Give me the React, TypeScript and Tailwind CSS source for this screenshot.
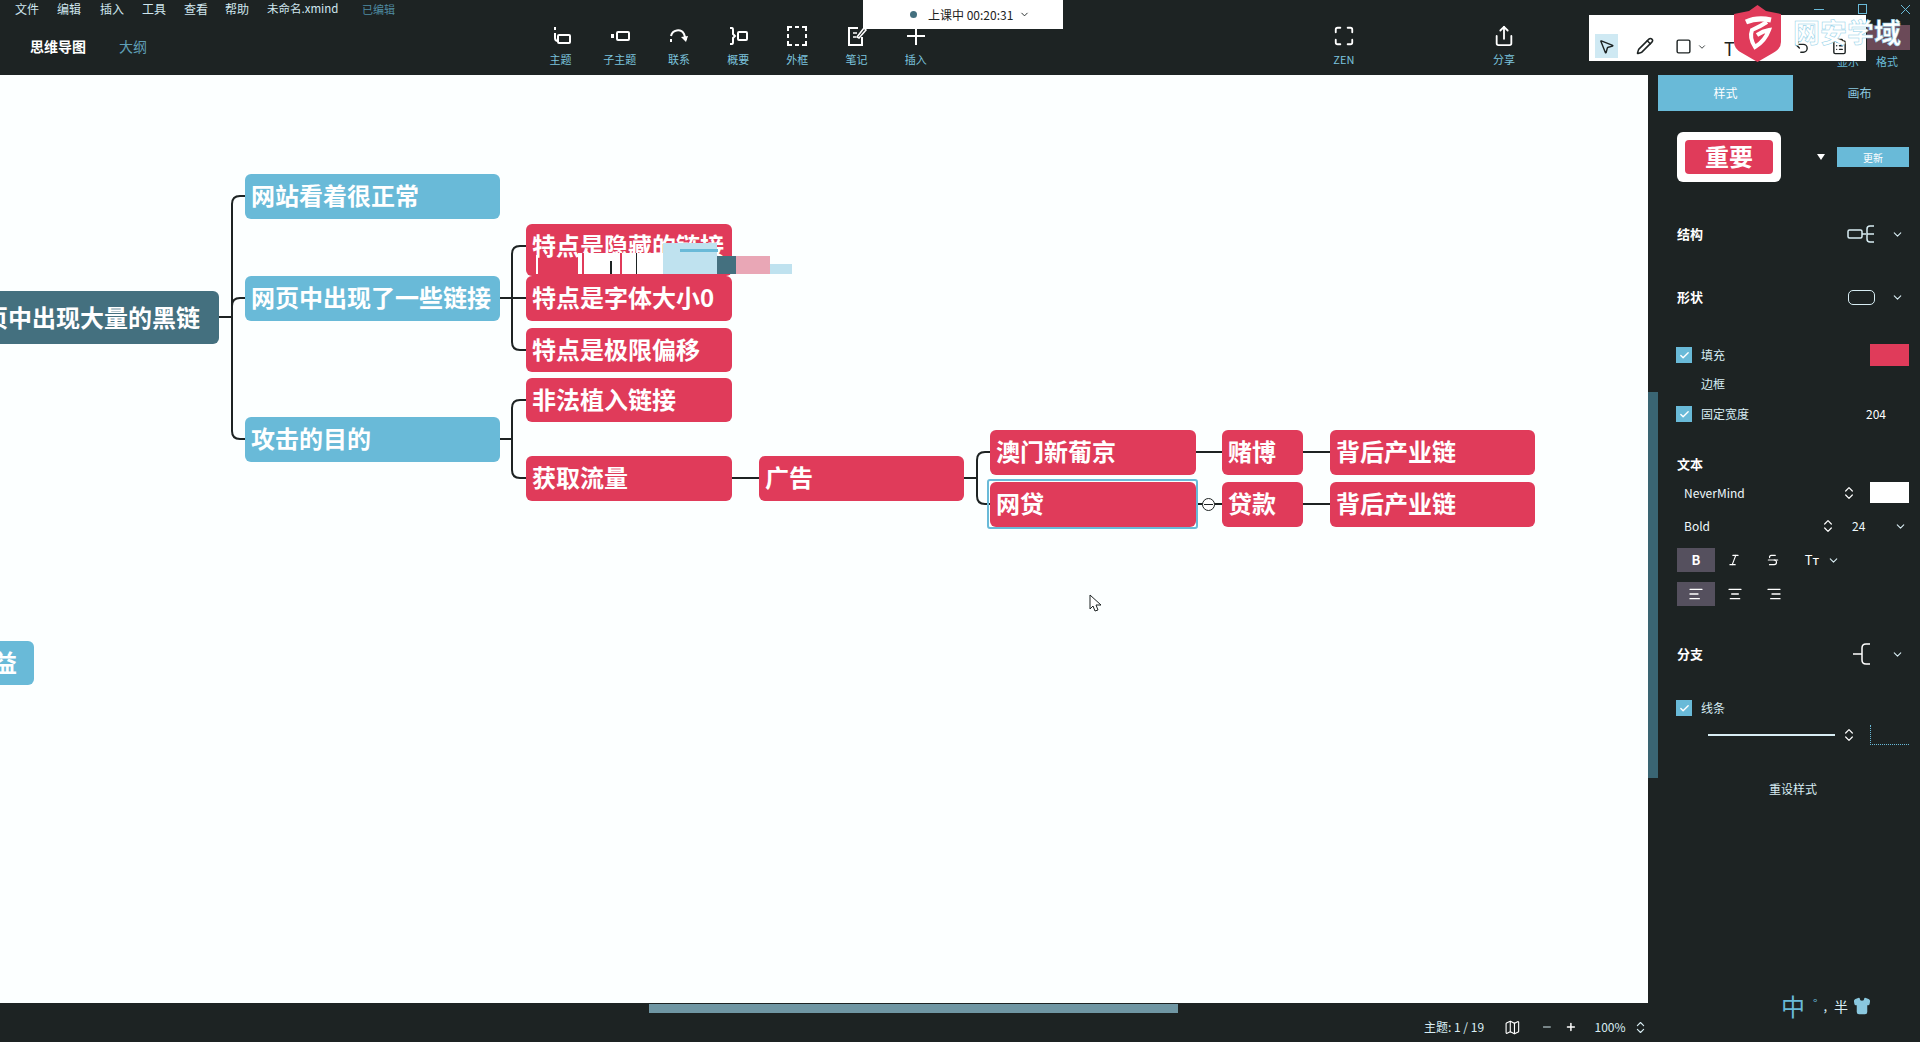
import React from "react";
import { ChevronDown, ChevronsUpDown, Map as MapIcon, Maximize, Share, MousePointer2, Pencil, Square, Undo2, ClipboardList, Italic, Strikethrough, AlignLeft, AlignCenter, AlignRight, Minus, Plus, Shirt, Check } from "lucide-react";

const FONT = "font-['Noto_Sans_CJK_SC','Noto_Sans',sans-serif]";

const ic = { width: 22, height: 22, viewBox: "0 0 22 22", fill: "none", stroke: "#ffffff", strokeWidth: 2 };
const IconTopic = () => (<svg {...ic}><path d="M5 2v3M5 8v5q0 3 3 3" /><rect x="8" y="10" width="12" height="8" rx="1" /></svg>);
const IconSub = () => (<svg {...ic}><rect x="2" y="9" width="3" height="4" fill="#fff" stroke="none" /><rect x="8" y="7" width="12" height="8" rx="1" /></svg>);
const IconRel = () => (<svg {...ic}><path d="M3 11a7 7 0 0 1 13-2l2 6" /><path d="M3 14v3" /><path d="M13 12l5 5 2-6z" fill="#fff" stroke="none" /></svg>);
const IconSum = () => (<svg {...ic}><path d="M3 3h2q1 0 1 2v4l2 2-2 2v4q0 2-1 2H3" /><rect x="11" y="7" width="9" height="8" rx="1" /></svg>);
const IconBox = () => (<svg {...ic}><path d="M2 6V2h4M9 2h4M16 2h4v4M20 9v4M20 16v4h-4M13 20H9M6 20H2v-4M2 13V9" /></svg>);
const IconNote = () => (<svg {...ic}><path d="M12 3H3v17h13v-8" /><path d="M7 8h4M7 12h3" strokeWidth="1.5" /><path d="M11 12l7-9 2 2-7 8z" strokeWidth="1.5" /></svg>);
const IconPlus = () => (<svg {...ic}><path d="M11 2v18M2 11h18" /></svg>);

function Tool({ icon, label }: { icon: React.ReactNode; label: string }) {
  return (
    <div className="w-[59.2px] h-full flex flex-col items-center pt-[7px] shrink-0">
      <div className="h-[22px] flex items-center justify-center">{icon}</div>
      <div className="mt-[2px] text-[11px] leading-[20px] text-[#7cc4de]">{label}</div>
    </div>
  );
}

function Node({ x, y, w, h, text, color = "bg-[#e03b5a]", pad = "pb-[3px]" }: { x: number; y: number; w: number; h: number; text: string; color?: string; pad?: string }) {
  return (
    <div
      className={`absolute ${color} ${pad} rounded-[6px] flex items-center pl-[6px] text-[24px] leading-none font-bold text-white whitespace-nowrap overflow-hidden`}
      style={{ left: x, top: y - 75, width: w, height: h }}
    >
      {text}
    </div>
  );
}

const LINES = [
  "M219 317H232", "M245 196H240Q232 196 232 204V431Q232 439 240 439H245", "M232 306Q232 298 240 298H245",
  "M500 298H526", "M526 246H520Q512 246 512 254V342Q512 350 520 350H526",
  "M500 439H512", "M526 400H520Q512 400 512 408V470Q512 478 520 478H526",
  "M732 478H759", "M964 478H977", "M990 452H985Q977 452 977 460V496Q977 504 985 504H990",
  "M1196 452H1222", "M1303 452H1330", "M1196 504H1222", "M1303 504H1330",
];

function Canvas() {
  return (
    <div className="relative flex-1 bg-[#fcffff] overflow-hidden">
      <svg className="absolute left-0 top-0" width="1648" height="928" viewBox="0 75 1648 928" fill="none">
        {LINES.map((d) => (<path key={d} d={d} stroke="#1d2323" strokeWidth="2" />))}
      </svg>

      <div className="absolute left-[-40px] top-[216px] w-[259px] h-[53px] bg-[#44707f] rounded-[6px] flex items-center pb-[2px] text-[24px] leading-none font-bold text-white whitespace-nowrap">网页中出现大量的黑链</div>
      <Node x={245} y={174} w={255} h={45} text="网站看着很正常" color="bg-[#69bad8]" />
      <Node x={245} y={276} w={255} h={45} text="网页中出现了一些链接" color="bg-[#69bad8]" />
      <Node x={245} y={417} w={255} h={45} text="攻击的目的" color="bg-[#69bad8]" />

      <Node x={526} y={224} w={206} h={52} text="特点是隐藏的链接" pad="pb-[10px]" />
      {/* 画面撕裂残影 */}
      <div className="absolute left-[536px] top-[180px] w-[2px] h-[19px] bg-white" />
      <div className="absolute left-[578px] top-[178px] w-[85px] h-[21px] bg-white flex">
        <div className="ml-[4px] w-[2px] h-full bg-[#e03b5a]" />
        <div className="ml-[26px] mt-[8px] w-[2px] h-[13px] bg-[#1d2323]" />
        <div className="ml-[8px] w-[2px] h-full bg-[#e03b5a]" />
        <div className="ml-[14px] w-[1px] h-full bg-[#1d2323]" />
      </div>
      <div className="absolute left-[663px] top-[168px] w-[54px] h-[31px] bg-[#bfe2ef]" />
      <div className="absolute left-[680px] top-[174px] w-[38px] h-[3px] bg-[#69bad8]" />
      <div className="absolute left-[717px] top-[181px] w-[19px] h-[18px] bg-[#44707f]" />
      <div className="absolute left-[736px] top-[181px] w-[34px] h-[18px] bg-[#e9a7b6]" />
      <div className="absolute left-[770px] top-[189px] w-[22px] h-[10px] bg-[#bfe2ef]" />

      <Node x={526} y={276} w={206} h={45} text="特点是字体大小0" />
      <Node x={526} y={328} w={206} h={44} text="特点是极限偏移" />
      <Node x={526} y={378} w={206} h={44} text="非法植入链接" />
      <Node x={526} y={456} w={206} h={45} text="获取流量" />
      <Node x={759} y={456} w={205} h={45} text="广告" />
      <Node x={990} y={430} w={206} h={45} text="澳门新葡京" />
      <div className="absolute left-[987px] top-[404px] w-[211px] h-[50px] border-2 border-[#69bad8] rounded-[3px]" />
      <Node x={990} y={482} w={206} h={45} text="网贷" />
      <Node x={1222} y={430} w={81} h={45} text="赌博" />
      <Node x={1222} y={482} w={81} h={45} text="贷款" />
      <Node x={1330} y={430} w={205} h={45} text="背后产业链" />
      <Node x={1330} y={482} w={205} h={45} text="背后产业链" />

      <div className="absolute left-[1202px] top-[423px] w-[13px] h-[13px] rounded-full border border-[#1d2323] bg-white flex items-center justify-center">
        <div className="w-[9px] h-[1px] bg-[#1d2323]" />
      </div>

      <div className="absolute left-[-40px] top-[566px] w-[74px] h-[44px] bg-[#69bad8] rounded-[6px] flex items-center justify-end pr-[18px] pb-[3px] text-[24px] leading-none font-bold text-white overflow-hidden">
        <span className="mr-[-1px]">益</span>
      </div>

      <svg className="absolute left-[1089px] top-[519px]" width="14" height="19" viewBox="0 0 14 19" fill="#fff" stroke="#1d2323" strokeWidth="1">
        <path d="M1 1v14l3-3 2 5 3-1-2-5h5z" />
      </svg>
    </div>
  );
}

const Chev = () => <ChevronDown size={13} strokeWidth={2} className="text-[#d8edf3]" />;
const Stepper = () => <ChevronsUpDown size={16} strokeWidth={1.8} className="text-white" />;

function Box({ checked = true }: { checked?: boolean }) {
  return (
    <div className="w-[16px] h-[16px] bg-[#69bad8] flex items-center justify-center shrink-0">
      {checked && <Check size={11} strokeWidth={3} className="text-white" />}
    </div>
  );
}

function Panel() {
  return (
    <div className="relative w-[272px] h-full bg-[#1d2323] flex flex-col shrink-0 text-[12px] text-[#d8edf3]">
      <div className="absolute left-0 top-[317px] w-[10px] h-[386px] bg-[#3a6573]" />

      <div className="flex h-[36px] shrink-0 pl-[10px]">
        <div className="w-[135px] shrink-0 bg-[#69bad8] text-white flex items-center justify-center">样式</div>
        <div className="ml-[3px] w-[127px] shrink-0 text-[#8ac8df] flex items-center justify-center">画布</div>
      </div>

      <div className="mt-[21px] h-[50px] pl-[29px] flex items-center shrink-0">
        <div className="w-[104px] h-[50px] bg-white rounded-[6px] flex items-center justify-center">
          <div className="w-[88px] h-[34px] bg-[#e03b5a] rounded-[4px] flex items-center justify-center pb-[2px] text-[24px] leading-none font-bold text-white">重要</div>
        </div>
        <div className="ml-[36px] w-0 h-0 border-l-[4px] border-r-[4px] border-t-[6px] border-l-transparent border-r-transparent border-t-white" />
        <div className="ml-[12px] w-[72px] h-[20px] bg-[#69bad8] text-white text-[10px] flex items-center justify-center">更新</div>
      </div>

      <div className="mt-[40px] h-[24px] pl-[29px] flex items-center shrink-0">
        <div className="font-bold text-[13px] text-white w-[170px]">结构</div>
        <svg width="28" height="20" viewBox="0 0 28 20" fill="none" stroke="#d8edf3" strokeWidth="1.5">
          <rect x="1" y="6" width="14" height="8" rx="1.5" /><path d="M15 10h4M27 2h-4q-3 0-3 3v10q0 3 3 3h4M20 10h7" />
        </svg>
        <div className="ml-[16px]"><Chev /></div>
      </div>

      <div className="mt-[39px] h-[24px] pl-[29px] flex items-center shrink-0">
        <div className="font-bold text-[13px] text-white w-[171px]">形状</div>
        <div className="w-[27px] h-[15px] rounded-[5px] border border-[#d8edf3]" />
        <div className="ml-[16px]"><Chev /></div>
      </div>

      <div className="mt-[35px] h-[22px] pl-[28px] flex items-center shrink-0">
        <Box />
        <div className="ml-[9px] w-[169px]">填充</div>
        <div className="w-[39px] h-[22px] bg-[#e03b5a]" />
      </div>

      <div className="mt-[8px] h-[20px] pl-[53px] flex items-center shrink-0">边框</div>

      <div className="mt-[10px] h-[20px] pl-[28px] flex items-center shrink-0">
        <Box />
        <div className="ml-[9px] w-[165px]">固定宽度</div>
        <div className="text-white">204</div>
      </div>

      <div className="mt-[30px] h-[20px] pl-[29px] flex items-center shrink-0 font-bold text-[13px] text-white">文本</div>

      <div className="mt-[8px] h-[21px] pl-[36px] flex items-center shrink-0 text-[#eef8fb]">
        <div className="w-[157px]">NeverMind</div>
        <Stepper />
        <div className="ml-[13px] w-[39px] h-[21px] bg-white" />
      </div>

      <div className="mt-[13px] h-[20px] pl-[36px] flex items-center shrink-0 text-[#eef8fb]">
        <div className="w-[136px]">Bold</div>
        <Stepper />
        <div className="ml-[16px] w-[42px]">24</div>
        <Chev />
      </div>

      <div className="mt-[12px] h-[24px] pl-[29px] flex items-center shrink-0 text-white">
        <div className="w-[38px] h-[24px] bg-[#55505e] flex items-center justify-center font-bold text-[13px]">B</div>
        <div className="w-[38px] flex justify-center"><Italic size={14} /></div>
        <div className="w-[40px] flex justify-center"><Strikethrough size={14} /></div>
        <div className="w-[38px] text-center text-[13px]">Tт</div>
        <div className="-ml-[4px]"><Chev /></div>
      </div>

      <div className="mt-[10px] h-[24px] pl-[29px] flex items-center shrink-0 text-white">
        <div className="w-[38px] h-[24px] bg-[#55505e] flex items-center justify-center"><AlignLeft size={16} /></div>
        <div className="w-[40px] flex justify-center"><AlignCenter size={16} /></div>
        <div className="w-[38px] flex justify-center"><AlignRight size={16} /></div>
      </div>

      <div className="mt-[38px] h-[20px] pl-[29px] flex items-center shrink-0">
        <div className="font-bold text-[13px] text-white w-[176px]">分支</div>
        <svg width="18" height="22" viewBox="0 0 18 22" fill="none" stroke="#ffffff" strokeWidth="1.5">
          <path d="M0 11h9M17 1h-4q-4 0-4 4v12q0 4 4 4h4" />
        </svg>
        <div className="ml-[20px]"><Chev /></div>
      </div>

      <div className="mt-[34px] h-[20px] pl-[28px] flex items-center shrink-0">
        <Box />
        <div className="ml-[9px]">线条</div>
      </div>

      <div className="mt-[7px] h-[20px] pl-[60px] flex items-center shrink-0">
        <div className="w-[127px] h-[2px] bg-[#d8edf3]" />
        <div className="ml-[6px]"><Stepper /></div>
        <div className="ml-[13px] w-[39px] h-[20px] border-l border-b border-dotted border-[#69bad8]" />
      </div>

      <div className="mt-[34px] h-[20px] pl-[18px] flex items-center justify-center shrink-0">重设样式</div>

      <div className="mt-auto mb-[24px] h-[24px] pl-[133px] flex items-center shrink-0 text-[#69bad8]">
        <span className="text-[24px] leading-none">中</span>
        <span className="ml-[8px] text-[12px] mb-[6px]">°</span>
        <span className="ml-[6px] text-[13px] text-[#d8edf3]">,</span>
        <span className="ml-[7px] text-[14px] text-[#d8edf3]">半</span>
        <Shirt size={18} fill="#8ac8df" className="ml-[5px] text-[#8ac8df]" />
      </div>
    </div>
  );
}

function Footer() {
  return (
    <div className="relative h-[39px] shrink-0 bg-[#1d2323] flex items-center pl-[1424px] pt-[9px] text-[12px] text-[#d8edf3]">
      <div className="absolute left-[649px] top-[1px] w-[529px] h-[9px] bg-[#6f96a3]" />
      <span className="whitespace-nowrap w-[63px]">主题: 1 / 19</span>
      <MapIcon size={17} strokeWidth={1.6} className="ml-[18px] text-white" />
      <Minus size={12} className="ml-[20px]" />
      <Plus size={12} strokeWidth={3} className="ml-[12px] text-white" />
      <span className="ml-[18px] w-[33px]">100%</span>
      <div className="ml-[6px]"><ChevronsUpDown size={15} strokeWidth={1.8} /></div>
    </div>
  );
}

function Header() {
  return (
    <div className="relative h-[75px] shrink-0 bg-[#1d2323] flex flex-col">
      <div className="h-[18px] flex items-center pl-[15px] text-[12px] text-[#cfe6ee] shrink-0">
        <span className="w-[42px]">文件</span>
        <span className="w-[43px]">编辑</span>
        <span className="w-[42px]">插入</span>
        <span className="w-[42px]">工具</span>
        <span className="w-[41px]">查看</span>
        <span className="w-[42px]">帮助</span>
        <span className="w-[95px] text-[11.5px]">未命名.xmind</span>
        <span className="text-[11px] text-[#4f8ba1]">已编辑</span>
        <div className="ml-auto flex items-center pr-[10px] text-[#69bad8]">
          <div className="w-[10px] h-[1px] bg-[#69bad8]" />
          <div className="ml-[34px] w-[9px] h-[10px] border border-[#69bad8]" />
          <svg className="ml-[34px]" width="9" height="9" viewBox="0 0 9 9" stroke="#69bad8" strokeWidth="1"><path d="M0 0l9 9M9 0L0 9" /></svg>
        </div>
      </div>
      <div className="h-[57px] flex shrink-0">
        <div className="w-[531px] shrink-0 pl-[30px] flex items-center">
          <span className="text-[14px] font-semibold text-white">思维导图</span>
          <span className="ml-[33px] text-[14px] text-[#5f9fb6]">大纲</span>
        </div>
        <Tool icon={<IconTopic />} label="主题" />
        <Tool icon={<IconSub />} label="子主题" />
        <Tool icon={<IconRel />} label="联系" />
        <Tool icon={<IconSum />} label="概要" />
        <Tool icon={<IconBox />} label="外框" />
        <Tool icon={<IconNote />} label="笔记" />
        <Tool icon={<IconPlus />} label="插入" />
        <div className="ml-[369px]"><Tool icon={<Maximize size={22} strokeWidth={2} className="text-white" />} label="ZEN" /></div>
        <div className="ml-[101px]"><Tool icon={<Share size={22} strokeWidth={2} className="text-white" />} label="分享" /></div>
      </div>

      {/* 录屏软件的浮层 */}
      <div className="absolute left-[863px] top-0 w-[200px] h-[29px] bg-white flex items-center pl-[47px] text-[12px] text-[#1d2323]">
        <div className="w-[7px] h-[7px] rounded-full bg-[#44707f]" />
        <span className="ml-[11px] whitespace-nowrap">上课中 00:20:31</span>
        <ChevronDown size={11} className="ml-[6px]" />
      </div>

      <div className="absolute left-[1837px] top-[54px] text-[11px] leading-[14px] text-[#69bad8]">显示</div>
      <div className="absolute left-[1876px] top-[54px] text-[11px] leading-[14px] text-[#69bad8]">格式</div>
      <div className="absolute left-[1867px] top-[25px] w-[43px] h-[25px] bg-[#6b4a58]" />

      <div className="absolute left-[1589px] top-[15px] w-[277px] h-[46px] bg-white flex items-end pb-[3px] pl-[6px] text-[#1d2323]">
        <div className="w-[23px] h-[24px] bg-[#cfe9f3] flex items-center justify-center"><MousePointer2 size={17} /></div>
        <Pencil size={18} className="ml-[18px] mb-[3px]" />
        <Square size={17} className="ml-[21px] mb-[3px]" />
        <ChevronDown size={10} className="ml-[5px] mb-[6px]" />
        <span className="ml-[17px] mb-[1px] text-[18px] leading-none">T</span>
        <Undo2 size={17} className="ml-[58px] mb-[3px]" />
        <ClipboardList size={17} className="ml-[21px] mb-[3px]" />
      </div>

      <div className="absolute left-[1793px] top-[16px] flex text-[27px] leading-[32px] font-bold text-white [-webkit-text-stroke:0.5px_#8fd0e8] whitespace-nowrap">网安学域</div>

      <svg className="absolute left-[1733px] top-[5px]" width="49" height="57" viewBox="0 0 49 57">
        <path d="M24.5 0L33 6L48 9V37Q48 44 40 48L24.5 57L9 48Q1 44 1 37V9L16 6Z" fill="#e03b5a" />
        <path d="M13 17Q24 12 38 15" fill="none" stroke="#fff" strokeWidth="5" />
        <path d="M34 17Q28 21 19 25Q16 33 22 42Q32 36 36 25Q30 26 24 30" fill="none" stroke="#fff" strokeWidth="4" />
      </svg>
    </div>
  );
}

export default function App() {
  return (
    <div className={`w-[1920px] h-[1042px] flex flex-col overflow-hidden bg-[#1d2323] ${FONT}`}>
      <Header />
      <div className="flex flex-1 min-h-0">
        <div className="flex flex-col w-[1648px] shrink-0">
          <Canvas />
          <Footer />
        </div>
        <Panel />
      </div>
    </div>
  );
}
